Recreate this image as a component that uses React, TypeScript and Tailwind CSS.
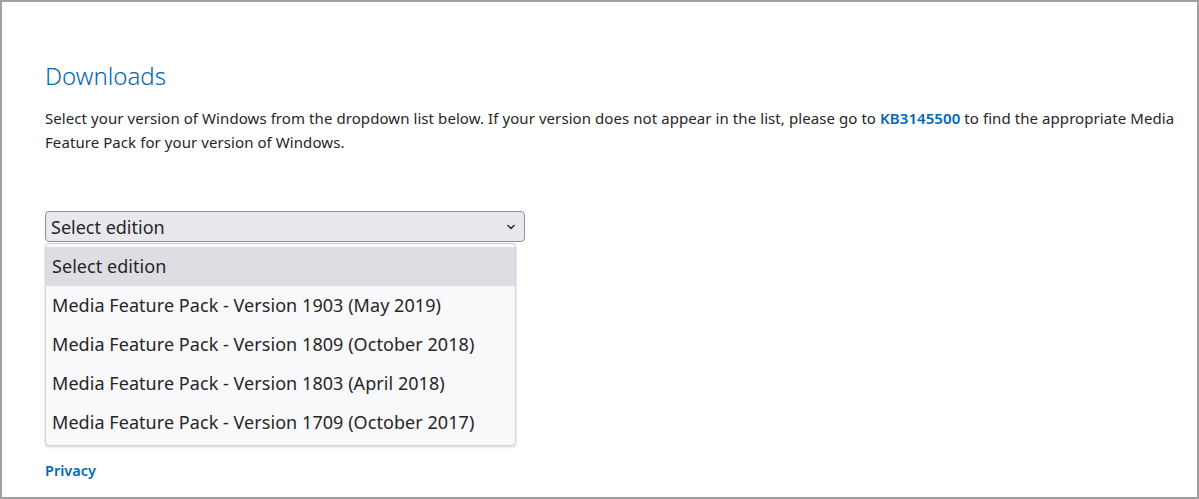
import { ChevronDown } from "lucide-react";

const options = [
  "Select edition",
  "Media Feature Pack - Version 1903 (May 2019)",
  "Media Feature Pack - Version 1809 (October 2018)",
  "Media Feature Pack - Version 1803 (April 2018)",
  "Media Feature Pack - Version 1709 (October 2017)",
];

const App = () => {
  return (
    <div className="w-[1199px] h-[499px] bg-white border-2 border-[#a0a0a0] font-['Noto_Sans',sans-serif] text-[#262626] overflow-hidden">
      <div className="pl-[43px] pr-2 pt-[58px]">
        <h2 className="text-[24px] leading-[32px] font-light text-[#0067b8]">Downloads</h2>
        <p className="mt-[14px] text-[15px] leading-[24px] tracking-[0.005em] max-w-[1140px]">
          Select your version of Windows from the dropdown list below. If your version does not appear in the list,
          please go to <a className="font-semibold text-[#0067b8]">KB3145500</a> to find the appropriate Media Feature
          Pack for your version of Windows.
        </p>
        <div className="relative mt-[57px] w-[480px]">
          <div className="h-[31px] flex items-center justify-between px-[5px] bg-[#e9e9ed] border border-[#8f8f9d] rounded-[4px]">
            <span className="text-[18px] leading-none">Select edition</span>
            <ChevronDown className="w-[12px] h-[12px] mr-[2px]" strokeWidth={3} />
          </div>
          <ul className="absolute left-0 top-[32px] w-[471px] py-[3px] bg-[#f9f9fb] border border-[#d4d4d8] rounded-[4px] shadow-[0_1px_3px_rgba(0,0,0,0.18)]">
            {options.map((o, i) => (
              <li
                key={o}
                className={`h-[39px] flex items-center px-[6px] text-[18px] tracking-[0.003em] ${i === 0 ? "bg-[#dedde3]" : ""}`}
              >
                {o}
              </li>
            ))}
          </ul>
        </div>
        <a className="block mt-[218px] text-[14.5px] font-semibold text-[#0067b8]">Privacy</a>
      </div>
    </div>
  );
};

export default App;
